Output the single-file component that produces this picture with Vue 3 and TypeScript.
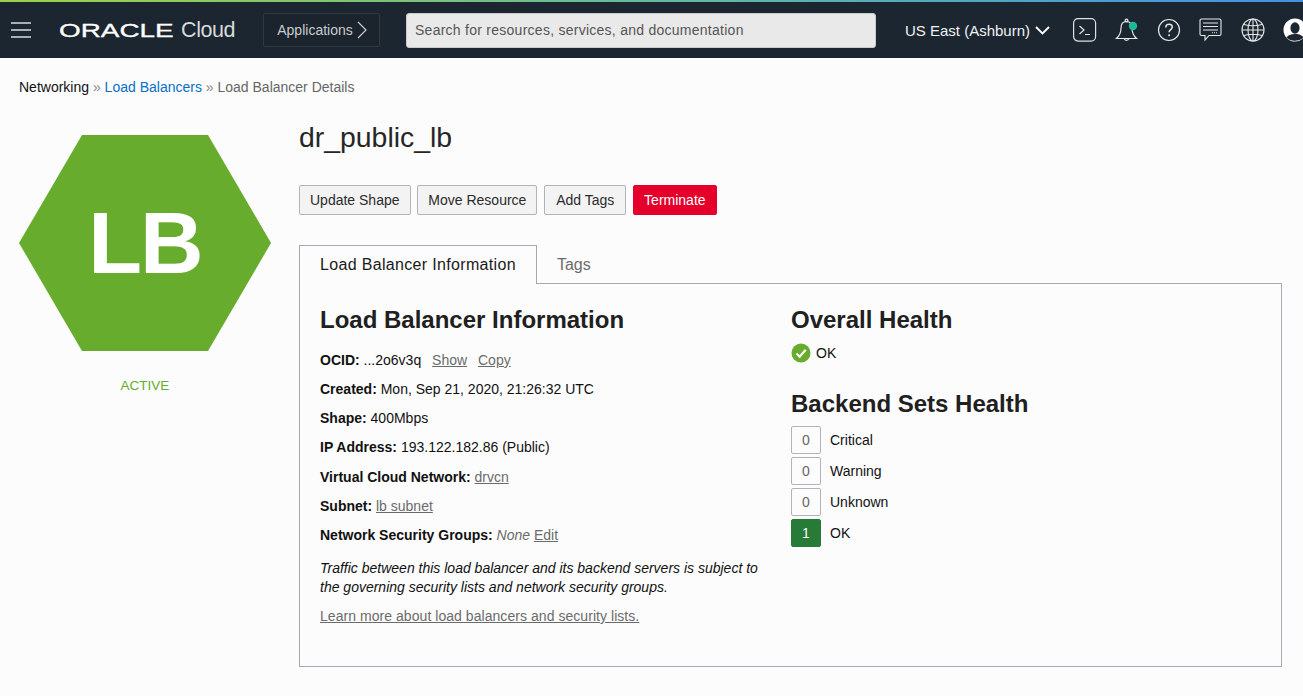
<template>
  <div class="page">
    <header class="topbar">
      <button class="menu" aria-label="Menu"><span></span><span></span><span></span></button>
      <div class="brand"><span class="oracle">ORACLE</span><span class="cloud">Cloud</span></div>
      <button class="apps">Applications
        <svg width="10" height="18" viewBox="0 0 10 18"><path d="M1 1l8 8-8 8" fill="none" stroke="#c8ccd0" stroke-width="1.2" /></svg>
      </button>
      <div class="search">Search for resources, services, and documentation</div>
      <div class="region">US East (Ashburn)
        <svg width="15" height="9" viewBox="0 0 15 9"><path d="M1 1l6.5 6.5L14 1" fill="none" stroke="#fff" stroke-width="1.8" /></svg>
      </div>
      <div class="icons">
        <svg width="24" height="24" viewBox="0 0 24 24" fill="none" stroke="#dfe1e3" stroke-width="1.2">
          <rect x="0.6" y="0.6" width="22" height="22.500" rx="4.500" />
          <path d="M6.500 8l4.500 4-4.500 4M12 16.500h5" />
        </svg>
        <svg width="24" height="24" viewBox="0 0 24 24" fill="none" stroke="#e6e8ea" stroke-width="1.2">
          <path d="M11.500 3.500c-3.700 0-5.500 3-5.500 6.800 0 4.200-1.700 7.700-4.600 10.200h20.200c-2.900-2.500-4.600-6-4.600-10.200 0-3.800-1.800-6.800-5.500-6.800z" />
          <circle cx="11.500" cy="2.500" r="1.400" />
          <path d="M9.200 20.700a2.400 2.400 0 0 0 4.600 0" />
          <circle cx="18" cy="8" r="4.200" fill="#1fb89a" stroke="none" />
        </svg>
        <svg width="24" height="24" viewBox="0 0 24 24" fill="none" stroke="#e6e8ea" stroke-width="1.2">
          <circle cx="12" cy="12" r="10.500" />
          <path d="M8.800 9.400c0-2 1.400-3.200 3.300-3.200s3.200 1.200 3.200 2.900c0 2.600-3.200 2.500-3.200 5.100" stroke-width="1.500" />
          <circle cx="12.100" cy="17.300" r="1" fill="#e6e8ea" stroke="none" />
        </svg>
        <svg width="24" height="24" viewBox="0 0 24 24" fill="none" stroke="#e6e8ea" stroke-width="1.1">
          <path d="M2.500 1h18A1.500 1.500 0 0 1 22 2.500v13.500a1.500 1.500 0 0 1-1.500 1.500H10l-4 4.500V17.500H2.500A1.500 1.500 0 0 1 1 16v-13.500A1.500 1.500 0 0 1 2.500 1z" />
          <path d="M4 5h15M4 8.500h15M4 12h15" />
          <path d="M13 14.700h6" stroke-dasharray="1 1" />
        </svg>
        <svg width="24" height="24" viewBox="0 0 24 24" fill="none" stroke="#e6e8ea" stroke-width="1.1">
          <circle cx="12" cy="12" r="11" />
          <ellipse cx="12" cy="12" rx="5" ry="11" />
          <path d="M12 1v22M1 12h22M3 6.500c5 1.400 13 1.400 18 0M3 17.500c5-1.400 13-1.400 18 0" />
        </svg>
        <svg width="24" height="24" viewBox="0 0 24 24">
          <circle cx="12" cy="12" r="11.500" fill="#fff" />
          <ellipse cx="12" cy="10" rx="4.600" ry="5.800" fill="#1c2630" />
          <path d="M3.500 19.500c2-3 5-3.600 8.500-3.600s6.500.6 8.500 3.600A11.500 11.500 0 0 1 12 22.800a11.500 11.500 0 0 1-8.500-3.300z" fill="#1c2630" />
        </svg>
      </div>
    </header>

    <main class="content">
      <nav class="crumbs">
        <span class="crumb-first">Networking</span><span class="sep"> » </span><a class="crumb-link">Load Balancers</a><span class="sep"> » </span><span class="crumb-last">Load Balancer Details</span>
      </nav>

      <div class="columns">
        <aside class="side">
          <div class="hex">LB</div>
          <div class="state">ACTIVE</div>
        </aside>

        <section class="detail">
          <h1>dr_public_lb</h1>
          <div class="actions">
            <button v-for="a in actions" :key="a" class="btn">{{ a }}</button>
            <button class="btn danger">Terminate</button>
          </div>

          <div class="tabs">
            <div class="tab active">Load Balancer Information</div>
            <div class="tab">Tags</div>
          </div>

          <div class="panel">
            <div class="info">
              <h2>Load Balancer Information</h2>
              <div class="row"><b>OCID:</b> ...2o6v3q <a class="link gap">Show</a> <a class="link gap">Copy</a></div>
              <div class="row"><b>Created:</b> Mon, Sep 21, 2020, 21:26:32 UTC</div>
              <div class="row"><b>Shape:</b> 400Mbps</div>
              <div class="row"><b>IP Address:</b> 193.122.182.86 (Public)</div>
              <div class="row"><b>Virtual Cloud Network:</b> <a class="link">drvcn</a></div>
              <div class="row"><b>Subnet:</b> <a class="link">lb subnet</a></div>
              <div class="row"><b>Network Security Groups:</b> <i class="none">None</i> <a class="link">Edit</a></div>
              <p class="note">Traffic between this load balancer and its backend servers is subject to the governing security lists and network security groups.</p>
              <a class="link learn">Learn more about load balancers and security lists.</a>
            </div>

            <div class="health">
              <h2>Overall Health</h2>
              <div class="overall">
                <svg width="20" height="20" viewBox="0 0 20 20">
                  <circle cx="10" cy="10" r="9.500" fill="#68ac2d" />
                  <path d="M5.500 10.500l3.200 3.200 6-7" fill="none" stroke="#fff" stroke-width="2.200" />
                </svg>
                OK
              </div>
              <h2 class="second">Backend Sets Health</h2>
              <div v-for="s in sets" :key="s.label" class="set">
                <span class="count" :class="{ good: s.count > 0 }">{{ s.count }}</span>
                {{ s.label }}
              </div>
            </div>
          </div>
        </section>
      </div>
    </main>
  </div>
</template>

<script setup lang="ts">
const actions: string[] = ['Update Shape', 'Move Resource', 'Add Tags']
const sets: { label: string; count: number }[] = [
  { label: 'Critical', count: 0 },
  { label: 'Warning', count: 0 },
  { label: 'Unknown', count: 0 },
  { label: 'OK', count: 1 }
]
</script>

<style>
html, body { margin: 0; background: #fcfcfc; overflow: hidden; }
</style>

<style scoped>
.page {
  width: 1303px;
  height: 696px;
  overflow: hidden;
  font-family: "Liberation Sans", Arial, sans-serif;
  font-size: 14px;
  color: #111;
  background: #fcfcfc;
}
.topbar {
  height: 56px;
  display: flex;
  align-items: center;
  background: #1c2630;
  border-top: 2px solid;
  border-image: linear-gradient(90deg, #9bd247 0%, #62b6a4 55%, #4390e6 100%) 1;
  color: #fff;
  white-space: nowrap;
}
.topbar > * { flex: none; }
.menu {
  width: 20px;
  margin-left: 11px;
  padding: 0;
  display: flex;
  flex-direction: column;
  gap: 5px;
  background: none;
  border: 0;
}
.menu span { display: block; height: 2px; background: #aaaeb2; }
.brand { margin-left: 28px; width: 177px; display: flex; align-items: baseline; }
.oracle {
  display: inline-block;
  width: 114px;
  font-size: 18px;
  line-height: 20px;
  transform: scaleX(1.55);
  transform-origin: left center;
  -webkit-text-stroke: 0.3px #fff;
}
.cloud { margin-left: 8px; font-size: 21.5px; color: #d8dadc; letter-spacing: -0.4px; }
.apps {
  width: 117px;
  height: 34px;
  margin-left: 27px;
  padding-left: 7px;
  display: flex;
  align-items: center;
  justify-content: center;
  gap: 4px;
  background: #1b232c;
  border: 1px solid #2f3942;
  border-radius: 2px;
  color: #c8ccd0;
  font: 14px "Liberation Sans", Arial, sans-serif;
}
.search {
  width: 470px;
  height: 35px;
  margin-left: 26px;
  padding-left: 8px;
  box-sizing: border-box;
  display: flex;
  align-items: center;
  background: #e9e9e9;
  border: 1px solid #c9cbcd;
  border-radius: 3px;
  color: #555;
  font-size: 14px;
  letter-spacing: 0.26px;
}
.region {
  margin-left: 29px;
  width: 168px;
  display: flex;
  align-items: center;
  gap: 5px;
  font-size: 15px;
  color: #f0f1f2;
}
.icons { display: flex; align-items: center; gap: 18px; }
.icons svg { flex: none; }
.content { padding: 21px 0 0 19px; }
.crumbs { line-height: 17px; white-space: pre; }
.sep { color: #8a8a8a; }
.crumb-link { color: #0a6fc9; }
.crumb-last { color: #666; }
.columns { display: flex; margin-top: 39px; }
.side { width: 280px; flex: none; }
.hex {
  width: 252px;
  height: 216px;
  display: flex;
  align-items: center;
  justify-content: center;
  clip-path: polygon(25% 0, 75% 0, 100% 50%, 75% 100%, 25% 100%, 0 50%);
  background: #68ac2d;
  color: #fff;
  font-size: 88px;
  font-weight: 700;
  letter-spacing: -2px;
}
.state { width: 252px; margin-top: 27px; text-align: center; color: #68ac2d; font-size: 13.5px; line-height: 16px; }
.detail { width: 983px; flex: none; }
h1 { margin: -14px 0 0; font-size: 28.4px; font-weight: 400; line-height: 32px; color: #262626; }
.actions { display: flex; gap: 6.8px; margin-top: 32px; }
.btn {
  height: 30px;
  padding: 0 10px;
  background: #f3f3f4;
  border: 1px solid #b0b4ba;
  border-radius: 2px;
  color: #2b2b2b;
  font: 14px "Liberation Sans", Arial, sans-serif;
}
.btn:nth-child(3) { padding: 0 11px; }
.danger { background: #e4002b; border-color: #e4002b; color: #fff; }
.tabs { display: flex; margin-top: 30px; height: 38px; }
.tab { padding: 0 20px; line-height: 39px; font-size: 16px; color: #6b6b6b; }
.tab.active {
  position: relative;
  z-index: 1;
  height: 38px;
  line-height: 38px;
  background: #fcfcfc;
  border: 1px solid #a6a8ab;
  border-bottom: 0;
  color: #1a1a1a;
  letter-spacing: 0.33px;
}
.panel {
  height: 384px;
  box-sizing: border-box;
  padding: 21px 20px 0;
  display: flex;
  border: 1px solid #a6a8ab;
}
.info { width: 471px; flex: none; }
h2 { margin: 0; font-size: 24px; line-height: 29px; font-weight: 700; color: #202020; }
.row { margin-top: 12.17px; line-height: 17px; }
.row:first-of-type { margin-top: 18px; }
.link { color: #6b6b6b; text-decoration: underline; }
.gap { margin-left: 7px; }
.none { color: #6b6b6b; }
.note { margin: 15px 0 0; max-width: 445px; font-style: italic; line-height: 19px; }
.learn { display: inline-block; margin-top: 11px; line-height: 17px; letter-spacing: 0.05px; }
.overall { display: flex; align-items: center; gap: 5px; margin-top: 8px; height: 22px; }
.second { margin-top: 25px; }
.set { display: flex; align-items: center; gap: 9px; height: 28px; margin-top: 3px; }
.second + .set { margin-top: 8px; }
.count {
  width: 30px;
  height: 28px;
  box-sizing: border-box;
  display: flex;
  align-items: center;
  justify-content: center;
  border: 1px solid #b0b4ba;
  border-radius: 2px;
  color: #666;
}
.count.good { background: #277a37; border-color: #277a37; color: #fff; }
</style>
